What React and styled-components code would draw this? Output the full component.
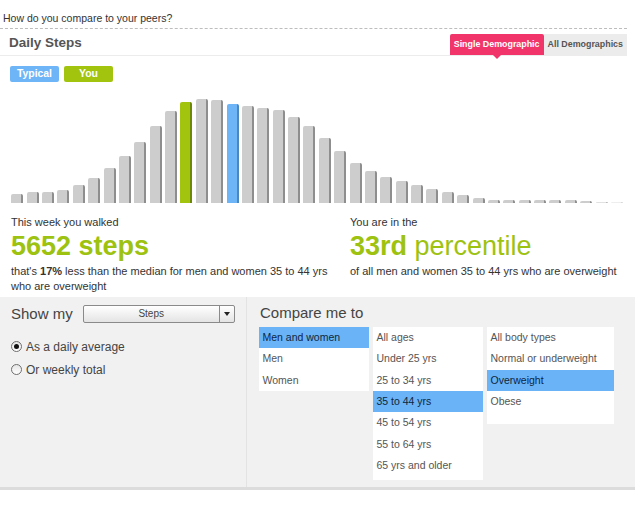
import React from 'react';
import styled, { createGlobalStyle } from 'styled-components';

const GlobalStyle = createGlobalStyle`
  body {
    margin: 0;
    background: #fff;
    font-family: "Liberation Sans", Arial, sans-serif;
    color: #444;
  }
`;

const Page = styled.div`
  width: 635px;
`;

const Top = styled.div`
  margin-right: 8px;
`;

const Intro = styled.div`
  padding: 12px 0 3px 3px;
  font-size: 10.5px;
  line-height: 13px;
  color: #333;
  border-bottom: 1px dashed #bdbdbd;
`;

const Header = styled.div`
  display: flex;
  justify-content: space-between;
  height: 26px;
  padding-left: 9px;
  border-bottom: 1px solid #ececec;
`;

const Title = styled.h2`
  margin: 0;
  padding-top: 6px;
  font-size: 13.5px;
  line-height: 16px;
  font-weight: bold;
  color: #555;
`;

const Tabs = styled.div`
  display: flex;
  align-self: flex-end;
`;

const Tab = styled.div`
  position: relative;
  height: 21px;
  line-height: 21px;
  padding: 0 ${(p) => (p.$wide ? 4 : 4)}px;
  font-size: 8.9px;
  font-weight: bold;
  color: ${(p) => (p.$active ? '#fff' : '#555')};
  background: ${(p) => (p.$active ? '#f1356a' : '#ececec')};
  border-radius: ${(p) => (p.$active ? '2px 2px 0 0' : '0')};

  &::after {
    content: '';
    display: ${(p) => (p.$active ? 'block' : 'none')};
    position: absolute;
    left: 50%;
    bottom: -4px;
    margin-left: -4px;
    border-left: 4px solid transparent;
    border-right: 4px solid transparent;
    border-top: 4px solid #f1356a;
  }
`;

const Legend = styled.div`
  display: flex;
  gap: 5px;
  padding: 10px 0 0 10px;
`;

const Pill = styled.span`
  width: 49px;
  height: 16px;
  line-height: 16px;
  border-radius: 2px;
  text-align: center;
  font-size: 10.4px;
  font-weight: bold;
  color: #fff;
  background: ${(p) => p.$color};
`;

const Chart = styled.div`
  display: flex;
  align-items: flex-end;
  gap: 3.38px;
  height: 110px;
  margin-top: 11px;
  padding-left: 11.3px;
`;

const tones = {
  gray: ['#cdcdcd', '#8e8e8e'],
  green: ['#a2c40e', '#6d8706'],
  blue: ['#6db5f6', '#4b88c0'],
};

const Bar = styled.div`
  flex: 0 0 12px;
  border-radius: 2px 2px 0 0;
  background: linear-gradient(
    90deg,
    ${(p) => tones[p.$tone][0]} 0 10px,
    ${(p) => tones[p.$tone][1]} 10px 12px
  );
`;

const Stats = styled.div`
  display: grid;
  grid-template-columns: 339px 1fr;
  margin-top: 12px;
  padding-left: 11px;
`;

const StatCol = styled.div`
  width: ${(p) => p.$width}px;
`;

const Label = styled.div`
  font-size: 11px;
  line-height: 14px;
  color: #333;
`;

const Big = styled.div`
  margin-top: 2px;
  font-size: 27px;
  line-height: 30px;
  color: #9dc20f;
  font-weight: ${(p) => (p.$bold ? 'bold' : 'normal')};

  b {
    font-weight: bold;
  }
`;

const Note = styled.div`
  margin-top: 3px;
  font-size: 11px;
  line-height: 15px;
  color: #333;
`;

const Panel = styled.div`
  display: grid;
  grid-template-columns: 246px 1fr;
  height: 190px;
  margin-top: 3px;
  background: #f1f1f1;
  border-bottom: 3px solid #dcdcdc;
`;

const LeftPane = styled.div`
  padding: 8px 0 0 11px;
`;

const RightPane = styled.div`
  padding: 8px 0 0 12px;
  border-left: 1px solid #e3e3e3;
`;

const Row = styled.div`
  display: flex;
  align-items: center;
  gap: 10px;
`;

const PaneTitle = styled.div`
  font-size: 15px;
  line-height: 16px;
  color: #444;
  padding-left: ${(p) => p.$indent || 0}px;
`;

const Select = styled.div`
  display: flex;
  width: 152px;
  height: 18px;
  box-sizing: border-box;
  border: 1px solid #8a8a8a;
  border-radius: 2px;
  background: linear-gradient(#ffffff, #e4e4e4);
  font-size: 10px;
  color: #444;
`;

const SelectValue = styled.div`
  flex: 1;
  text-align: center;
  line-height: 16px;
`;

const SelectArrow = styled.div`
  display: flex;
  align-items: center;
  justify-content: center;
  width: 14px;
  border-left: 1px solid #8a8a8a;

  &::before {
    content: '';
    border-left: 3.5px solid transparent;
    border-right: 3.5px solid transparent;
    border-top: 4px solid #222;
  }
`;

const Radios = styled.div`
  margin-top: 12px;
`;

const RadioRow = styled.label`
  display: flex;
  align-items: center;
  gap: 4px;
  height: 23px;
  font-size: 12px;
  color: #444;
`;

const RadioDot = styled.span`
  display: flex;
  align-items: center;
  justify-content: center;
  width: 11px;
  height: 11px;
  box-sizing: border-box;
  border: 1px solid #6e6e6e;
  border-radius: 50%;
  background: linear-gradient(#e6e6e6, #ffffff);

  &::after {
    content: '';
    display: ${(p) => (p.$checked ? 'block' : 'none')};
    width: 5px;
    height: 5px;
    border-radius: 50%;
    background: #111;
  }
`;

const Lists = styled.div`
  display: flex;
  align-items: flex-start;
  gap: 4px;
  margin-top: 6px;
`;

const List = styled.div`
  width: ${(p) => p.$width}px;
  padding-bottom: ${(p) => p.$pad || 0}px;
  background: #fff;
`;

const Item = styled.div`
  height: 21.33px;
  line-height: 21.33px;
  padding-left: 3.5px;
  font-size: 10.5px;
  color: ${(p) => (p.$selected ? '#10263d' : '#555')};
  background: ${(p) => (p.$selected ? '#69b3f6' : 'transparent')};
`;

const heights = [
  9, 11, 11, 13, 18, 25, 35, 47, 61, 77, 92, 101, 104, 103, 99, 97, 95, 93, 86, 77,
  65, 52, 40, 32, 26, 22, 18, 14, 11, 8, 5.5, 3.5, 3, 3, 3, 3, 3, 2, 1.5, 1,
];

const toneFor = (i) => (i === 11 ? 'green' : i === 14 ? 'blue' : 'gray');

const lists = [
  { width: 110, pad: 0, items: ['Men and women', 'Men', 'Women'], selected: 0 },
  {
    width: 110,
    pad: 4,
    items: ['All ages', 'Under 25 yrs', '25 to 34 yrs', '35 to 44 yrs', '45 to 54 yrs', '55 to 64 yrs', '65 yrs and older'],
    selected: 3,
  },
  { width: 127, pad: 12, items: ['All body types', 'Normal or underweight', 'Overweight', 'Obese'], selected: 2 },
];

export default function App() {
  return (
    <Page>
      <GlobalStyle />
      <Top>
        <Intro>How do you compare to your peers?</Intro>
        <Header>
          <Title>Daily Steps</Title>
          <Tabs>
            <Tab $active>Single Demographic</Tab>
            <Tab>All Demographics</Tab>
          </Tabs>
        </Header>
      </Top>

      <Legend>
        <Pill $color="#6db5f6">Typical</Pill>
        <Pill $color="#a2c40e">You</Pill>
      </Legend>

      <Chart>
        {heights.map((h, i) => (
          <Bar
            key={i}
            $tone={toneFor(i)}
            style={{ height: `${h}px`, opacity: i === 38 ? 0.6 : i === 39 ? 0.35 : 1 }}
          />
        ))}
      </Chart>

      <Stats>
        <StatCol $width={328}>
          <Label>This week you walked</Label>
          <Big $bold>5652 steps</Big>
          <Note>
            that's <b>17%</b> less than the median for men and women 35 to 44 yrs who are overweight
          </Note>
        </StatCol>
        <StatCol $width={285}>
          <Label>You are in the</Label>
          <Big>
            <b>33rd</b> percentile
          </Big>
          <Note>of all men and women 35 to 44 yrs who are overweight</Note>
        </StatCol>
      </Stats>

      <Panel>
        <LeftPane>
          <Row>
            <PaneTitle>Show my</PaneTitle>
            <Select>
              <SelectValue>Steps</SelectValue>
              <SelectArrow />
            </Select>
          </Row>
          <Radios>
            <RadioRow>
              <RadioDot $checked />
              As a daily average
            </RadioRow>
            <RadioRow>
              <RadioDot />
              Or weekly total
            </RadioRow>
          </Radios>
        </LeftPane>
        <RightPane>
          <PaneTitle $indent={1}>Compare me to</PaneTitle>
          <Lists>
            {lists.map((l, li) => (
              <List key={li} $width={l.width} $pad={l.pad}>
                {l.items.map((t, i) => (
                  <Item key={t} $selected={i === l.selected}>
                    {t}
                  </Item>
                ))}
              </List>
            ))}
          </Lists>
        </RightPane>
      </Panel>
    </Page>
  );
}
